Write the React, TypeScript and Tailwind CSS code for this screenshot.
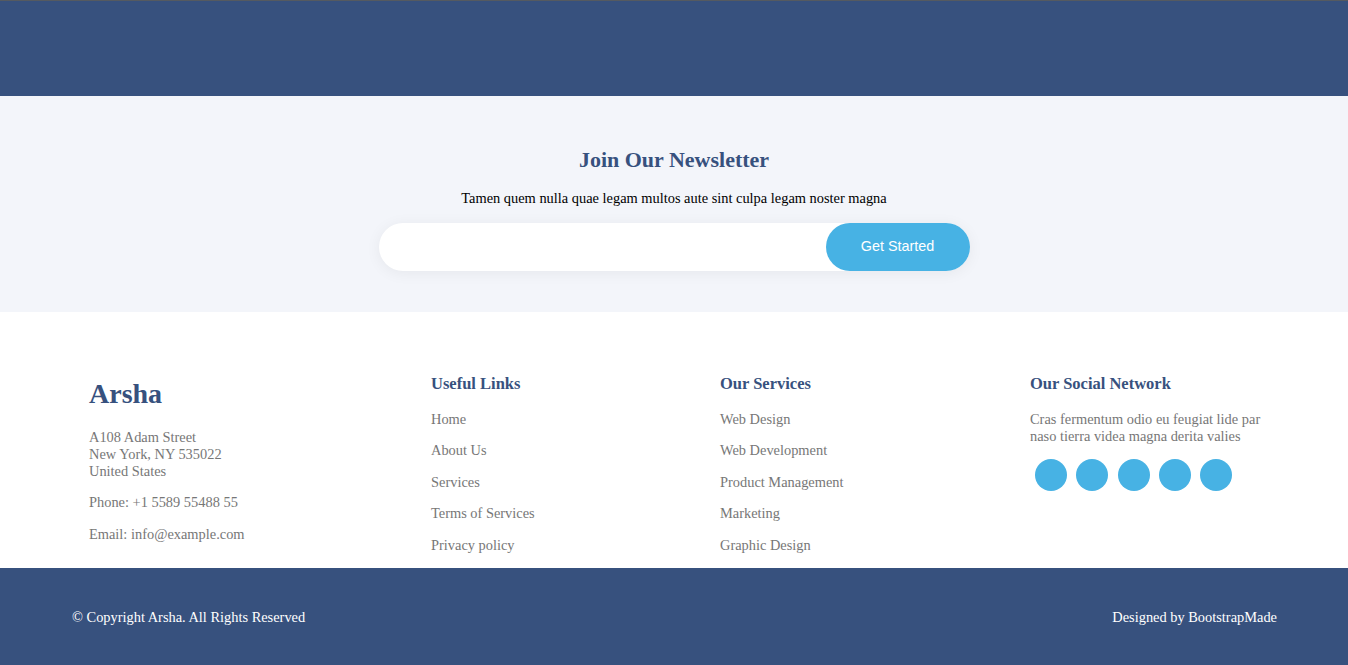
import React from "react";

const serif = { fontFamily: '"Liberation Serif", "Times New Roman", serif' };

export default function App() {
  const useful = ["Home", "About Us", "Services", "Terms of Services", "Privacy policy"];
  const services = ["Web Design", "Web Development", "Product Management", "Marketing", "Graphic Design"];
  return (
    <div style={serif} className="w-[1348px] min-h-[665px] bg-white">
      <div className="h-[1px] bg-[#555a60]" />
      <div className="h-[95px] bg-[#37517e]" />
      <section className="h-[216px] bg-[#f3f5fa] flex flex-col items-center pt-[50px]">
        <h4 className="text-[22px] font-bold leading-[27px] text-[#37517e]">Join Our Newsletter</h4>
        <p className="mt-[17px] text-[14.4px] leading-[17px] text-black">
          Tamen quem nulla quae legam multos aute sint culpa legam noster magna
        </p>
        <form className="mt-[16px] w-[591px] h-[48px] rounded-full bg-white shadow-[0_2px_15px_rgba(0,0,0,0.06)] flex justify-end">
          <button
            type="button"
            style={{ fontFamily: '"Liberation Sans", Arial, sans-serif' }}
            className="w-[144px] h-[48px] rounded-full bg-[#47b2e4] text-white text-[14.4px]"
          >
            Get Started
          </button>
        </form>
      </section>
      <section className="h-[256px] bg-white flex pl-[89px] pt-[62px]">
        <div className="w-[342px] pt-[3px]">
          <h3 className="text-[28px] font-bold leading-[34px] text-[#37517e]">Arsha</h3>
          <div className="mt-[18px] text-[14.4px] leading-[17px] text-[#777777]">
            <p className="mb-[14px]">
              A108 Adam Street
              <br />
              New York, NY 535022
              <br />
              United States
            </p>
            <p className="mb-[15px]">Phone: +1 5589 55488 55</p>
            <p>Email: info@example.com</p>
          </div>
        </div>
        <div className="w-[289px]">
          <h4 className="text-[16.5px] font-bold leading-[19px] text-[#37517e]">Useful Links</h4>
          <ul className="mt-[17.5px] text-[14.4px] leading-[17px] text-[#777777] flex flex-col gap-[14.5px]">
            {useful.map((t) => (
              <li key={t}>{t}</li>
            ))}
          </ul>
        </div>
        <div className="w-[310px]">
          <h4 className="text-[16.5px] font-bold leading-[19px] text-[#37517e]">Our Services</h4>
          <ul className="mt-[17.5px] text-[14.4px] leading-[17px] text-[#777777] flex flex-col gap-[14.5px]">
            {services.map((t) => (
              <li key={t}>{t}</li>
            ))}
          </ul>
        </div>
        <div className="w-[232px]">
          <h4 className="text-[16.5px] font-bold leading-[19px] text-[#37517e]">Our Social Network</h4>
          <p className="mt-[17.5px] text-[14.4px] leading-[17px] text-[#777777]">
            Cras fermentum odio eu feugiat lide par naso tierra videa magna derita valies
          </p>
          <div className="mt-[14.5px] ml-[5px] flex gap-[9.3px]">
            {[0, 1, 2, 3, 4].map((i) => (
              <span key={i} className="w-[32px] h-[32px] rounded-full bg-[#47b2e4]" />
            ))}
          </div>
        </div>
      </section>
      <footer className="h-[97px] bg-[#37517e] flex items-center justify-between pl-[72px] pr-[71px] pt-[2px] text-white text-[14.4px]">
        <div>© Copyright Arsha. All Rights Reserved</div>
        <div>Designed by BootstrapMade</div>
      </footer>
    </div>
  );
}
